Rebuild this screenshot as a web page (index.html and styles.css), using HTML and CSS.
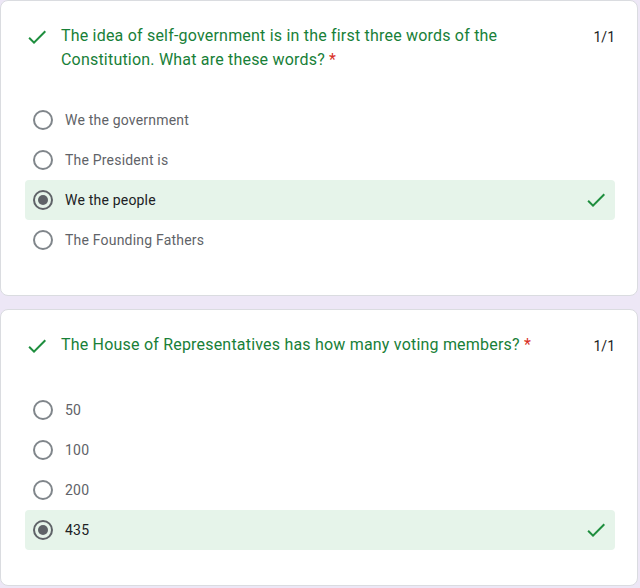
FILE: index.html
```html
<!DOCTYPE html>
<html lang="en">
<head>
<meta charset="utf-8">
<title>Quiz results</title>
<link rel="stylesheet" href="styles.css">
</head>
<body>
<main class="page">
  <section class="card">
    <div class="q-header">
      <svg class="q-check" viewBox="0 0 24 24" width="24" height="24"><path d="M9 16.17L4.83 12l-1.42 1.41L9 19 21 7l-1.41-1.41z"/></svg>
      <div class="q-title">The idea of self-government is in the first three words of the Constitution. What are these words?&nbsp;<span class="req">*</span></div>
      <div class="q-points">1/1</div>
    </div>
    <ul class="options">
      <li class="option"><span class="radio"></span><span class="opt-label">We the government</span></li>
      <li class="option"><span class="radio"></span><span class="opt-label">The President is</span></li>
      <li class="option option-correct"><span class="radio radio-on"></span><span class="opt-label">We the people</span>
        <svg class="opt-check" viewBox="0 0 24 24" width="24" height="24"><path d="M9 16.17L4.83 12l-1.42 1.41L9 19 21 7l-1.41-1.41z"/></svg></li>
      <li class="option"><span class="radio"></span><span class="opt-label">The Founding Fathers</span></li>
    </ul>
  </section>
  <section class="card">
    <div class="q-header">
      <svg class="q-check" viewBox="0 0 24 24" width="24" height="24"><path d="M9 16.17L4.83 12l-1.42 1.41L9 19 21 7l-1.41-1.41z"/></svg>
      <div class="q-title">The House of Representatives has how many voting members?&nbsp;<span class="req">*</span></div>
      <div class="q-points">1/1</div>
    </div>
    <ul class="options">
      <li class="option"><span class="radio"></span><span class="opt-label">50</span></li>
      <li class="option"><span class="radio"></span><span class="opt-label">100</span></li>
      <li class="option"><span class="radio"></span><span class="opt-label">200</span></li>
      <li class="option option-correct"><span class="radio radio-on"></span><span class="opt-label">435</span>
        <svg class="opt-check" viewBox="0 0 24 24" width="24" height="24"><path d="M9 16.17L4.83 12l-1.42 1.41L9 19 21 7l-1.41-1.41z"/></svg></li>
    </ul>
  </section>
</main>
</body>
</html>
```
FILE: styles.css
```css
* { box-sizing: border-box; }
html, body {
  margin: 0;
  padding: 0;
  background: #ede7f6;
  font-family: Roboto, "Liberation Sans", Arial, sans-serif;
}
.page {
  display: flex;
  flex-direction: column;
  gap: 13px;
  width: 638px;
}
.card {
  background: #fff;
  border: 1px solid #dadce0;
  border-radius: 8px;
  padding: 23px 22px 35px 24px;
}
.q-header {
  display: flex;
  align-items: flex-start;
  min-height: 29px;
}
.q-check {
  flex: none;
  fill: #1e8e3e;
  margin-top: 1px;
  margin-right: 12px;
}
.q-title {
  flex: 1;
  font-size: 16px;
  line-height: 24px;
  color: #188038;
  letter-spacing: 0.2px;
  padding-right: 30px;
}
.req { color: #d93025; }
.q-points {
  flex: none;
  font-size: 14px;
  line-height: 24px;
  color: #202124;
  padding-top: 1px;
}
.options {
  list-style: none;
  margin: 28px 0 0;
  padding: 0;
}
.option {
  display: flex;
  align-items: center;
  height: 40px;
  padding: 0 7px 0 8px;
  border-radius: 4px;
}
.option-correct { background: #e6f4ea; }
.radio {
  flex: none;
  width: 20px;
  height: 20px;
  border: 2px solid #80868b;
  border-radius: 50%;
  margin-right: 12px;
  display: flex;
  align-items: center;
  justify-content: center;
}
.radio-on { border-color: #5f6368; }
.radio-on::after {
  content: "";
  width: 10px;
  height: 10px;
  border-radius: 50%;
  background: #5f6368;
}
.opt-label {
  flex: 1;
  font-size: 14px;
  color: #5f6368;
  letter-spacing: 0.2px;
}
.option-correct .opt-label { color: #202124; }
.opt-check {
  flex: none;
  fill: #1e8e3e;
}
```
